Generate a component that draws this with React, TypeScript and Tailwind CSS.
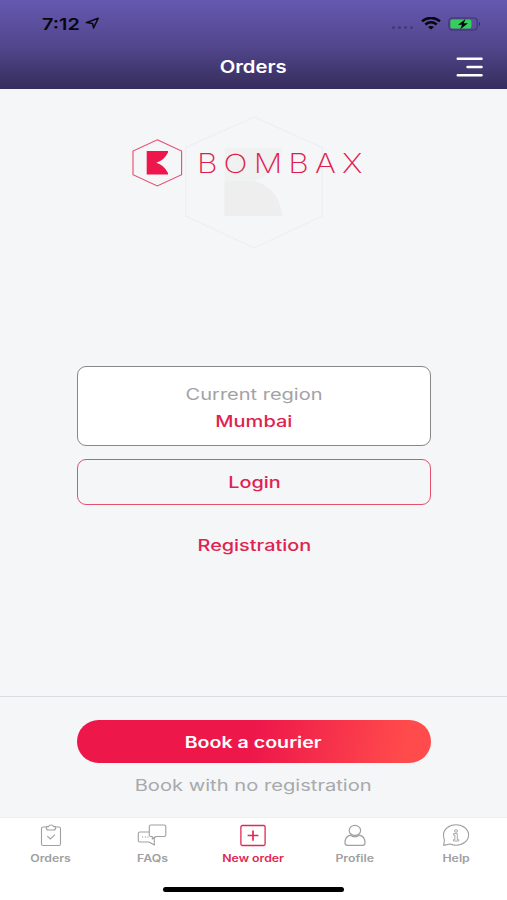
import type { ReactNode } from "react";
import clsx from "clsx";

const TABS = [
  { id: "orders", label: "Orders", icon: <OrdersIcon /> },
  { id: "faqs", label: "FAQs", icon: <FaqIcon /> },
  { id: "new", label: "New order", icon: <NewOrderIcon />, active: true },
  { id: "profile", label: "Profile", icon: <ProfileIcon /> },
  { id: "help", label: "Help", icon: <HelpIcon /> },
];

function Wide({ className, children }: { className?: string; children: ReactNode }) {
  return <span className={clsx("inline-block whitespace-nowrap", className)}>{children}</span>;
}

function OrdersIcon() {
  return (
    <svg width="30" height="24" viewBox="0 0 30 24" fill="none" stroke="currentColor" strokeWidth="1.1">
      <path d="M9 3H7.2Q5.5 3 5.5 4.5V20Q5.5 21.5 7.2 21.5H22.8Q24.5 21.5 24.5 20V4.5Q24.5 3 22.8 3H21" />
      <path d="M10 2.6H12.4Q13 1 15 1Q17 1 17.6 2.6H20Q19.8 6 17.5 6H12.5Q10.2 6 10 2.6Z" />
      <path d="M11.3 12.2L14.3 15L19 10.6" />
    </svg>
  );
}

function FaqIcon() {
  return (
    <svg width="30" height="24" viewBox="0 0 30 24" fill="none" stroke="currentColor" strokeWidth="1.1" strokeLinejoin="round">
      <path d="M12 8H3Q1.3 8 1.3 9.6V16.4Q1.3 18 3 18H12L17.3 21V18" />
      <path d="M17.3 18V13.6L19.5 12.5H27.2Q28.8 12.5 28.8 11V2.6Q28.8 1 27.2 1H14Q12.3 1 12.3 2.6V11Q12.3 12.5 14 12.5H15.3V15L18.5 12.5" />
      <path d="M5 13H6.2M7.8 13H9M10.4 13H11.6" />
    </svg>
  );
}

function NewOrderIcon() {
  return (
    <svg width="30" height="24" viewBox="0 0 30 24" fill="none" stroke="currentColor">
      <rect x="2.9" y="1.5" width="24.2" height="20" rx="1.5" strokeWidth="1.3" />
      <path d="M9.6 11.5H20.4M15 6.5V16.7" strokeWidth="1.7" />
    </svg>
  );
}

function ProfileIcon() {
  return (
    <svg width="30" height="24" viewBox="0 0 30 24" fill="none" stroke="currentColor" strokeWidth="1.2">
      <ellipse cx="14.9" cy="6.4" rx="5.7" ry="5" />
      <path d="M10.3 11.2C6.6 12.2 5 15 5 18.8Q5 21.4 7.5 21.4H22.5Q25 21.4 25 18.8C25 15 23.4 12.2 19.5 11.2Q15 14.4 10.3 11.2Z" />
    </svg>
  );
}

function HelpIcon() {
  return (
    <svg width="30" height="24" viewBox="0 0 30 24" fill="none" stroke="currentColor" strokeWidth="1.1" strokeLinejoin="round">
      <path d="M2.6 21.4L3.5 15.9Q2.5 13.8 2.5 11C2.5 5.2 8 .8 15 .8S27.6 5.2 27.6 11S22 21.2 15 21.2Q11.8 21.2 9 20Z" />
      <ellipse cx="15" cy="7" rx="1.5" ry="1.3" strokeWidth=".9" />
      <path d="M12.5 9.6H16.3V15.6H17.7V17H12.5V15.6H13.9V11H12.5Z" strokeWidth=".9" />
    </svg>
  );
}

function StatusBar() {
  return (
    <div className="flex h-[47px] items-center justify-between pl-[42px] pr-[25px] text-[#08070d]">
      <div className="flex items-center">
        <Wide className="w-[38px] origin-left scale-x-[1.24] text-[16px] font-semibold">7:12</Wide>
        <svg className="ml-[5px]" width="15" height="13" viewBox="0 0 15 13">
          <path d="M1.3 5.6L13.2 1.2L8.6 11L7.6 6.5Z" fill="none" stroke="currentColor" strokeWidth="1.5" strokeLinejoin="round" />
        </svg>
      </div>
      <div className="flex items-center">
        <div className="mr-[8px] mt-[8px] flex gap-[3px]">
          {[0, 1, 2, 3].map((dot) => (
            <span key={dot} className="h-[3px] w-[3px] rounded-full bg-[#43387c]" />
          ))}
        </div>
        <svg width="20" height="13" viewBox="0 0 20 13" fill="none" stroke="currentColor" strokeWidth="2.5">
          <path d="M1 4.2Q10-2.5 19 4.2" />
          <path d="M4.3 7.4Q10 3 15.7 7.4" />
          <path d="M7 9.9Q10 7.9 13 9.9L10 12.6Z" fill="currentColor" stroke="none" />
        </svg>
        <svg className="ml-[7px]" width="34" height="14" viewBox="0 0 34 14">
          <rect x=".9" y="1" width="28.3" height="12" rx="3.5" fill="none" stroke="#3d3268" strokeWidth="1.1" />
          <rect x="2.4" y="2.5" width="21" height="9" rx="1.8" fill="#35cf5c" />
          <path d="M17.5 2L10 7.8H14L12.3 12.2L20 6.2H15.8Z" fill="currentColor" />
          <path d="M31 4.8Q33 7 31 9.2Z" fill="#30264f" />
        </svg>
      </div>
    </div>
  );
}

function Header() {
  return (
    <header className="h-[89px] shrink-0 bg-linear-to-b from-[#6558b0] via-[#53478f] to-[#362d5c]">
      <StatusBar />
      <div className="grid h-[42px] grid-cols-[1fr_auto_1fr] items-center text-white">
        <span />
        <Wide className="scale-x-[1.19] text-[17px] font-semibold">Orders</Wide>
        <svg className="mb-[2px] mr-[23px] justify-self-end" width="28" height="22" viewBox="0 0 28 22" stroke="white" strokeWidth="2.6" strokeLinecap="round">
          <path d="M1.8 2.7H25.5M11.6 11H25.5M1.8 19.3H25.5" />
        </svg>
      </div>
    </header>
  );
}

function Logo() {
  return (
    <div className="relative h-[135px]">
      <svg className="mx-auto block" width="140" height="135" viewBox="0 0 140 135" fill="none">
        <path d="M70 2L138.3 32.5V101L70 133L1.7 101V32.5Z" stroke="#eef0f1" strokeWidth="1.4" />
        <path d="M40.5 32.7H98.2Q95 58 69.5 66H40.5Z" fill="#f0f1f1" />
        <path d="M40.5 66H69.5Q95 72 98.2 101H40.5Z" fill="#eeeeef" />
      </svg>
      <div className="absolute left-[131px] top-[22.5px] flex items-center">
        <svg width="53" height="50" viewBox="0 0 53 50" fill="none">
          <path d="M26.3 1.8L50.6 13V36.7L26.3 47.9L2 36.7V13Z" stroke="#ea4a6c" strokeWidth="1.1" />
          <path d="M15.7 13H37V14.5Q33 22.5 25.3 24.8Q33 27 37 35V36.6H15.7Z" fill="#ee174c" />
        </svg>
        <Wide className="ml-[12.5px] mt-[2px] origin-left scale-x-[1.2] text-[26.5px] font-extralight leading-none tracking-[5.1px] text-[#e11c4d]">
          BOMBAX
        </Wide>
      </div>
    </div>
  );
}

export default function App() {
  return (
    <main className="flex h-[900px] w-[507px] flex-col overflow-hidden bg-[#f4f6f8] font-['Inter',sans-serif]">
      <Header />
      <section className="flex flex-1 flex-col pt-[26px]">
        <Logo />
        <div className="ml-[77px] mt-[116px] flex w-[354px] flex-col text-center text-[15.5px] font-medium text-[#df2350]">
          <button className="flex h-[80px] flex-col items-center justify-center gap-[3px] rounded-[9px] border border-[#86888a] bg-white pt-[4px]">
            <Wide className="scale-x-[1.29] font-normal text-[#a2a2a4]">Current region</Wide>
            <Wide className="scale-x-[1.29]">Mumbai</Wide>
          </button>
          <button className="mt-[13px] h-[46px] rounded-[9px] border border-[#e5506f] pt-[2px]">
            <Wide className="scale-x-[1.28]">Login</Wide>
          </button>
          <button className="mt-[29px]">
            <Wide className="scale-x-[1.28]">Registration</Wide>
          </button>
        </div>
      </section>
      <section className="flex h-[121px] shrink-0 flex-col items-center border-t border-[#d9dcde] pt-[23px] text-[15.5px]">
        <button className="h-[43px] w-[354px] rounded-full bg-[linear-gradient(100deg,#ee174a_50%,#ff4b4c_92%)] pt-[2px] text-white">
          <Wide className="scale-x-[1.265] font-semibold">Book a courier</Wide>
        </button>
        <button className="mt-[11px] text-[#a8a9ab]">
          <Wide className="scale-x-[1.3]">Book with no registration</Wide>
        </button>
      </section>
      <nav className="flex h-[83px] shrink-0 flex-col items-center border-t border-[#eceeef] bg-white">
        <div className="grid w-full grid-cols-5 pt-[6px]">
          {TABS.map((tab) => (
            <button
              key={tab.id}
              className={clsx("flex flex-col items-center", tab.active ? "text-[#df2852]" : "text-[#a0a0a2]")}
            >
              {tab.icon}
              <Wide className="mt-[2px] scale-x-[1.23] text-[10px] font-semibold leading-[17px]">{tab.label}</Wide>
            </button>
          ))}
        </div>
        <div className="mt-[20px] h-[5px] w-[181px] rounded-full bg-black" />
      </nav>
    </main>
  );
}
